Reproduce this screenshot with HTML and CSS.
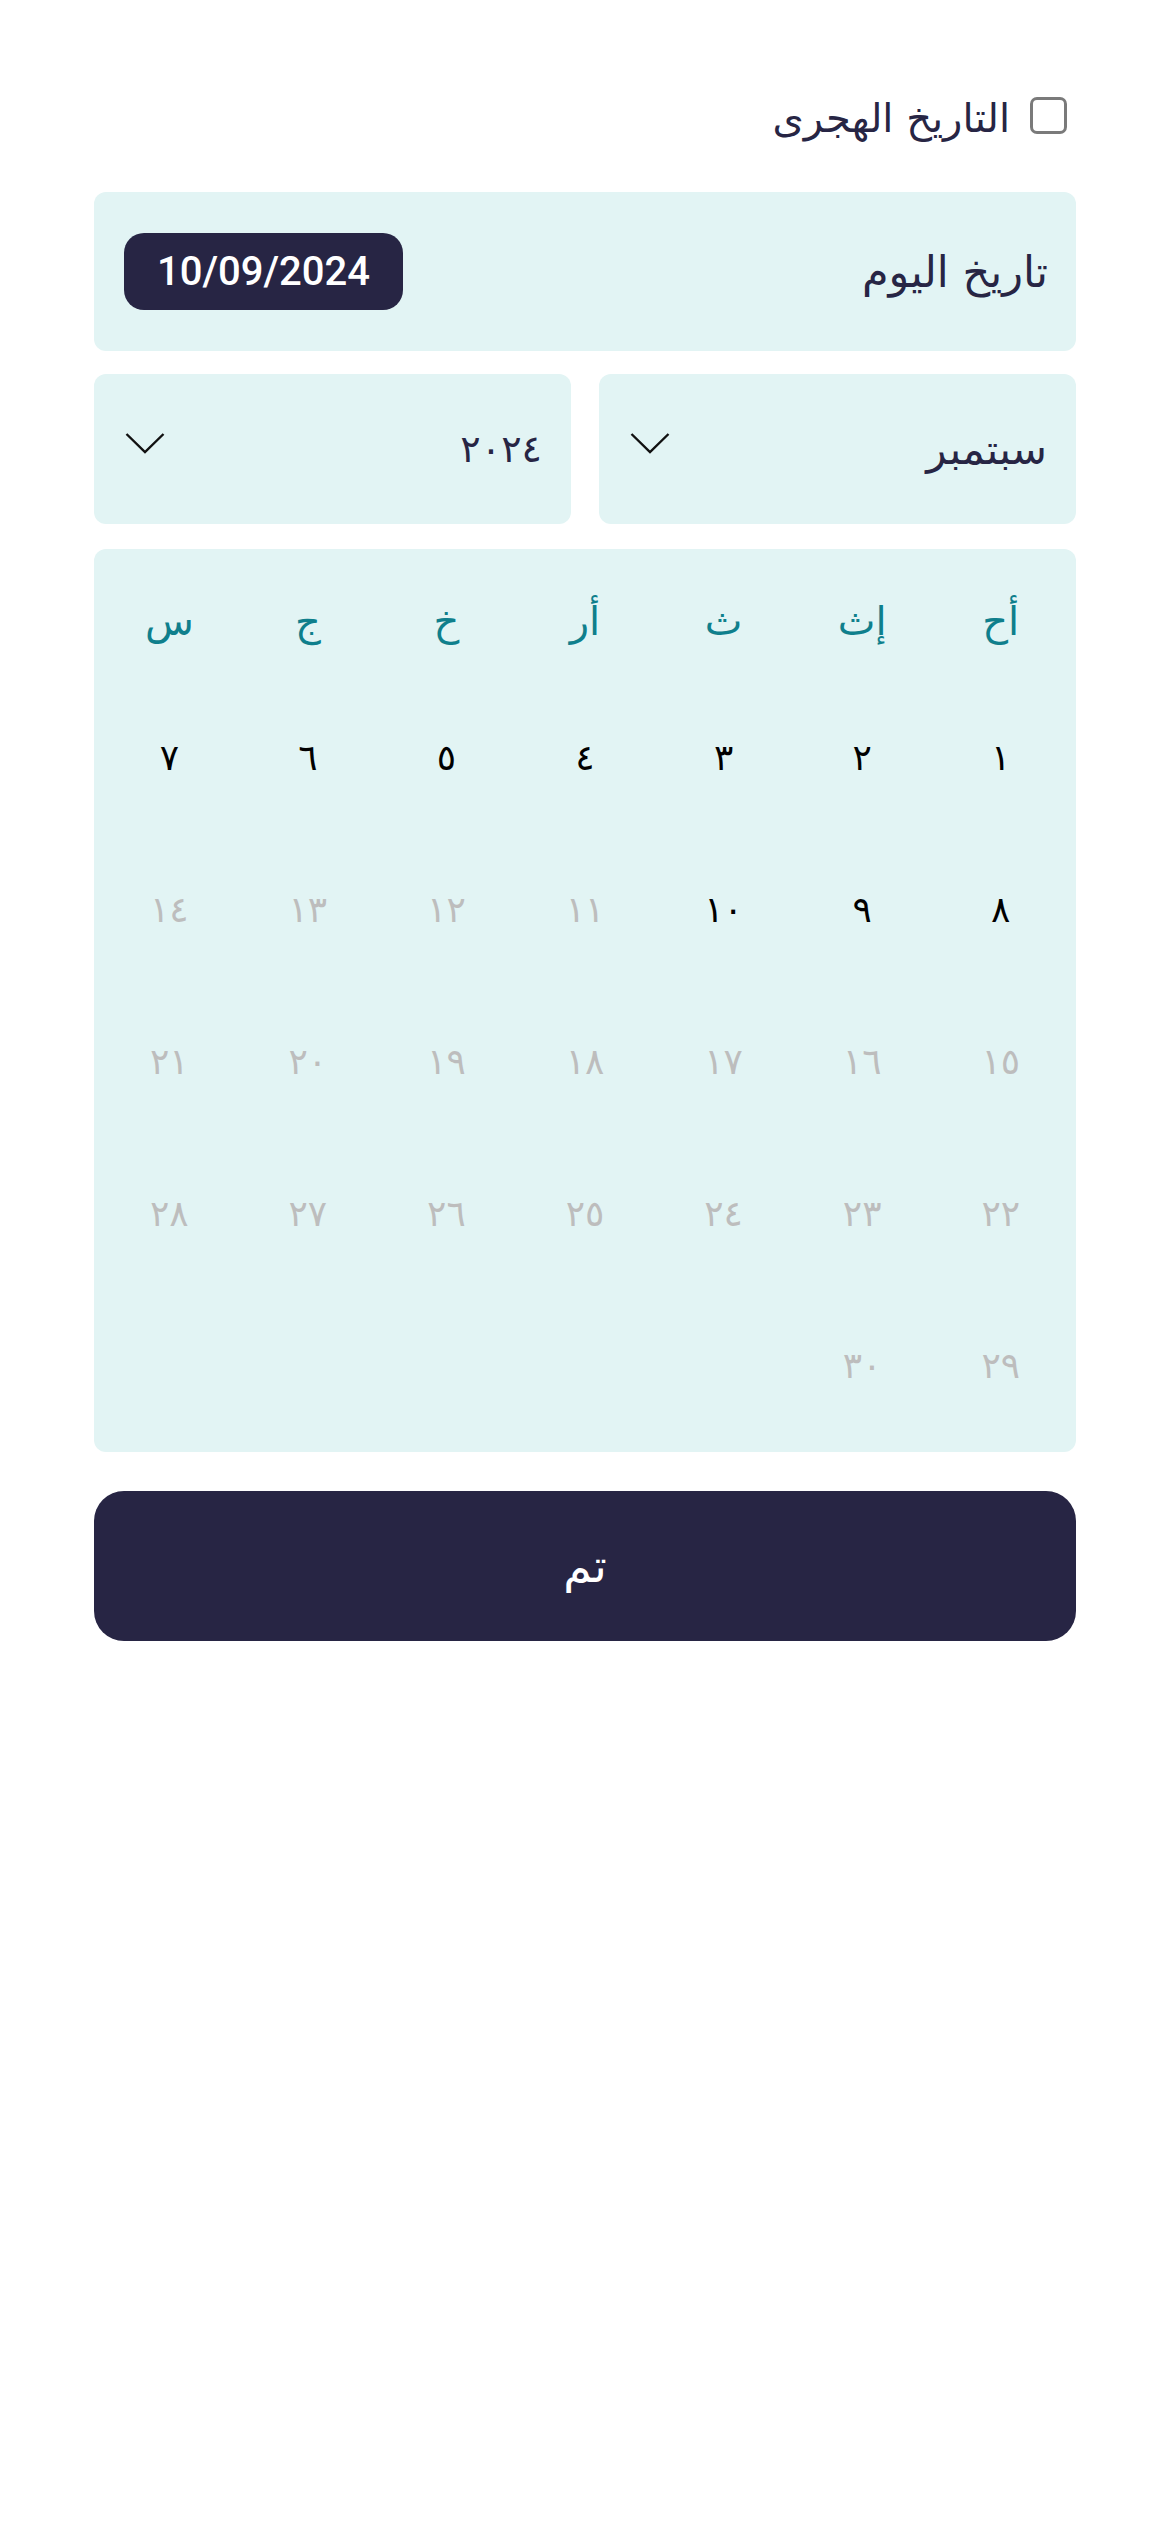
FILE: index.html
```html
<!DOCTYPE html>
<html lang="ar" dir="rtl">
<head>
<meta charset="utf-8">
<link rel="stylesheet" href="styles.css">
</head>
<body>
<main class="page">
  <label class="hijri">
    <span class="box"></span>
    <span class="hijri-text">التاريخ الهجرى</span>
  </label>

  <section class="today">
    <span class="today-label">تاريخ اليوم</span>
    <span class="today-pill">10/09/2024</span>
  </section>

  <section class="selects">
    <div class="select">
      <span class="select-text">سبتمبر</span>
      <svg class="chev" viewBox="0 0 40 22" width="40" height="22"><path d="M1.5 2 L20 20 L38.5 2" fill="none" stroke="#111" stroke-width="2.4"/></svg>
    </div>
    <div class="select">
      <span class="select-text year">٢٠٢٤</span>
      <svg class="chev" viewBox="0 0 40 22" width="40" height="22"><path d="M1.5 2 L20 20 L38.5 2" fill="none" stroke="#111" stroke-width="2.4"/></svg>
    </div>
  </section>

  <section class="calendar">
    <div class="grid head">
      <span>أح</span><span>إث</span><span>ث</span><span>أر</span><span>خ</span><span>ج</span><span>س</span>
    </div>
    <div class="grid days">
      <span class="on">١</span><span class="on">٢</span><span class="on">٣</span><span class="on">٤</span><span class="on">٥</span><span class="on">٦</span><span class="on">٧</span>
      <span class="on">٨</span><span class="on">٩</span><span class="on">١٠</span><span>١١</span><span>١٢</span><span>١٣</span><span>١٤</span>
      <span>١٥</span><span>١٦</span><span>١٧</span><span>١٨</span><span>١٩</span><span>٢٠</span><span>٢١</span>
      <span>٢٢</span><span>٢٣</span><span>٢٤</span><span>٢٥</span><span>٢٦</span><span>٢٧</span><span>٢٨</span>
      <span>٢٩</span><span>٣٠</span>
    </div>
  </section>

  <button class="done">تم</button>
</main>
</body>
</html>
```

FILE: styles.css
```css
* { box-sizing: border-box; }
html, body { margin: 0; padding: 0; background: #ffffff; }
body {
  font-family: "DejaVu Sans", "Noto Sans", sans-serif;
  color: #272544;
}
.page {
  width: 1170px;
  padding: 97px 94px 0 94px;
  display: flex;
  flex-direction: column;
}
.hijri {
  display: flex;
  align-items: center;
  gap: 20px;
  padding-right: 9px;
  height: 37px;
}
.box {
  width: 37px;
  height: 37px;
  border: 3px solid #7a7a7a;
  border-radius: 7px;
  flex: none;
}
.hijri-text {
  font-size: 40px;
  line-height: 1;
  color: #272544;
  font-weight: 500;
  margin-top: 4px;
}
.today {
  margin-top: 58px;
  height: 159px;
  background: #e2f4f4;
  border-radius: 12px;
  display: flex;
  align-items: center;
  justify-content: space-between;
  padding: 0 28px 0 30px;
}
.today-label {
  font-size: 43px;
  font-weight: 500;
  color: #272544;
}
.today-pill {
  background: #272544;
  color: #ffffff;
  border-radius: 20px;
  width: 279px;
  height: 77px;
  display: flex;
  align-items: center;
  justify-content: center;
  font-family: "Roboto", "Liberation Sans", sans-serif;
  font-size: 40px;
  font-weight: 500;
  direction: ltr;
}
.selects {
  margin-top: 23px;
  display: grid;
  grid-template-columns: 1fr 1fr;
  gap: 28px;
}
.select {
  height: 150px;
  background: #e2f4f4;
  border-radius: 12px;
  display: flex;
  align-items: center;
  justify-content: space-between;
  padding: 0 29px 0 31px;
}
.select-text {
  font-size: 42px;
  font-weight: 500;
  color: #272544;
}
.select-text.year { font-size: 38px; }
.chev { display: block; margin-top: -12px; }
.calendar {
  margin-top: 25px;
  height: 903px;
  background: #e2f4f4;
  border-radius: 12px;
  padding: 12px 6px 0 6px;
}
.grid {
  display: grid;
  grid-template-columns: repeat(7, 1fr);
}
.grid span {
  display: flex;
  align-items: center;
  justify-content: center;
}
.head span {
  height: 120px;
  color: #0f7f8c;
  font-size: 40px;
  font-weight: 500;
}
.days span {
  height: 152px;
  color: #bdbdbd;
  font-size: 36px;
  font-weight: 500;
}
.days span.on { color: #000000; }
.done {
  margin-top: 39px;
  height: 150px;
  border: none;
  border-radius: 30px;
  background: #272544;
  color: #ffffff;
  font-family: "DejaVu Sans", sans-serif;
  font-size: 46px;
  font-weight: 500;
}
```
